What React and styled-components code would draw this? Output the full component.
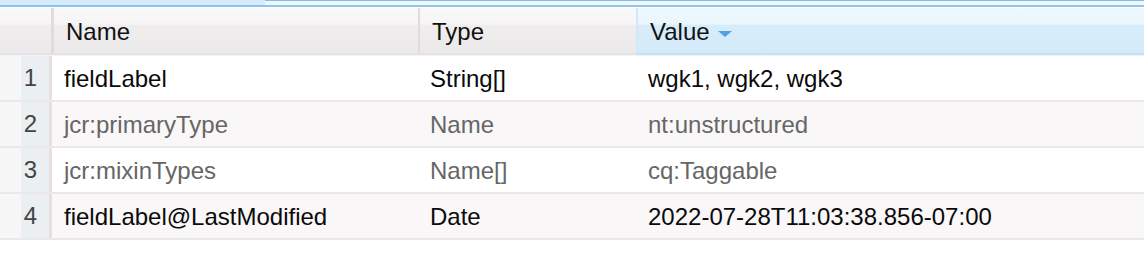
import React from 'react';
import styled, { createGlobalStyle } from 'styled-components';

const GlobalStyle = createGlobalStyle`
  html, body {
    margin: 0;
    padding: 0;
    background: #ffffff;
  }
  body {
    font-family: 'Liberation Sans', Arial, sans-serif;
  }
`;

const COLUMNS = '52px 366px 218px 1fr';

const TabStrip = styled.div`
  display: flex;
  height: 5px;
`;

const TabActive = styled.div`
  width: 265px;
  background: #d7ecfa;
`;

const TabRest = styled.div`
  flex: 1;
  box-sizing: border-box;
  border-top: 1px solid #86bde8;
  background: #eef7fd;
`;

const StripLine = styled.div`
  height: 2px;
  background: #8ec4ea;
  border-bottom: 1px solid #ffffff;
`;

const HeaderRow = styled.div`
  display: grid;
  grid-template-columns: ${COLUMNS};
  height: 48px;
  box-sizing: border-box;
  border-bottom: 1px solid #f4f2f3;
`;

const HeaderCell = styled.div`
  display: flex;
  align-items: center;
  gap: 8px;
  padding: 3px 0 0 12px;
  box-sizing: border-box;
  font-size: 24px;
  color: #111;
  border-left: 2px solid ${(p) => (p.$sorted ? '#d2e8f8' : '#e3dadd')};
  border-bottom: 2px solid ${(p) => (p.$sorted ? '#c4e1f6' : '#e6e2e4')};
  background: ${(p) =>
    p.$sorted
      ? 'linear-gradient(#eef8fe 0%, #eaf5fd 36%, #d7ecfa 38%, #d6ebf9 100%)'
      : 'linear-gradient(#faf9fa 0%, #f6f4f5 36%, #efedee 38%, #ebe9ea 100%)'};

  &:first-child {
    border-left: none;
    border-right: 1px solid #e3dadd;
  }
`;

const SortArrow = styled.span`
  width: 0;
  height: 0;
  margin-top: 3px;
  border-left: 7px solid transparent;
  border-right: 7px solid transparent;
  border-top: 6px solid #4ea1e2;
`;

const Row = styled.div`
  display: grid;
  grid-template-columns: ${COLUMNS};
  height: 46px;
  box-sizing: border-box;
  padding-top: 1px;
  border-bottom: 2px solid #ece7e9;
  background: ${(p) => (p.$alt ? '#f9f7f8' : '#ffffff')};
  color: ${(p) => (p.$muted ? '#666666' : '#0a0a0a')};
`;

const NumberCell = styled.div`
  display: flex;
  align-items: center;
  justify-content: flex-end;
  padding-right: 12px;
  margin-top: -1px;
  font-size: 24px;
  color: #444;
  border-right: 3px solid #e8dfe3;
  background: linear-gradient(90deg, #f8f7f8 0%, #f8f7f8 42%, #e9eff2 44%, #eceff1 100%);
`;

const Cell = styled.div`
  display: flex;
  align-items: center;
  padding-left: 12px;
  font-size: 24px;
  white-space: nowrap;
  overflow: hidden;
`;

const properties = [
  { name: 'fieldLabel', type: 'String[]', value: 'wgk1, wgk2, wgk3' },
  { name: 'jcr:primaryType', type: 'Name', value: 'nt:unstructured', muted: true },
  { name: 'jcr:mixinTypes', type: 'Name[]', value: 'cq:Taggable', muted: true },
  { name: 'fieldLabel@LastModified', type: 'Date', value: '2022-07-28T11:03:38.856-07:00' },
];

export default function App() {
  return (
    <>
      <GlobalStyle />
      <TabStrip>
        <TabActive />
        <TabRest />
      </TabStrip>
      <StripLine />
      <HeaderRow>
        <HeaderCell />
        <HeaderCell>Name</HeaderCell>
        <HeaderCell>Type</HeaderCell>
        <HeaderCell $sorted>
          Value
          <SortArrow />
        </HeaderCell>
      </HeaderRow>
      {properties.map((prop, i) => (
        <Row key={prop.name} $alt={i % 2 === 1} $muted={prop.muted}>
          <NumberCell>{i + 1}</NumberCell>
          <Cell>{prop.name}</Cell>
          <Cell>{prop.type}</Cell>
          <Cell>{prop.value}</Cell>
        </Row>
      ))}
    </>
  );
}
